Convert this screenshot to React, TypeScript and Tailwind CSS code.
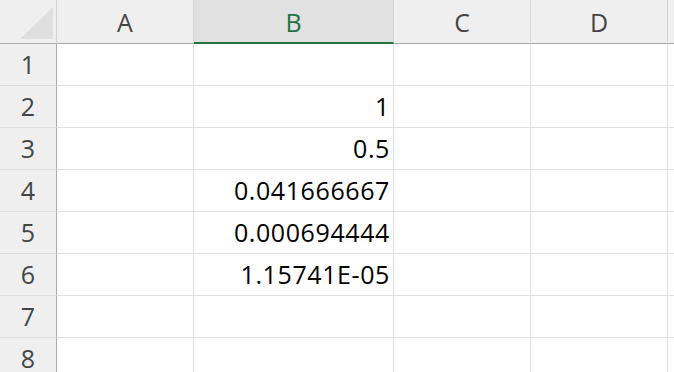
import React from 'react';

const cols = [
  { key: 'A', width: 'w-[137px]' },
  { key: 'B', width: 'w-[200px]' },
  { key: 'C', width: 'w-[137px]' },
  { key: 'D', width: 'w-[137px]' },
];

const values: Record<number, string> = {
  2: '1',
  3: '0.5',
  4: '0.041666667',
  5: '0.000694444',
  6: '1.15741E-05',
};

const rows = [1, 2, 3, 4, 5, 6, 7, 8];

const App: React.FC = () => {
  return (
    <div
      className="w-[674px] h-[372px] overflow-hidden bg-white text-[25px] leading-none text-[#222]"
      style={{ fontFamily: '"Open Sans", "Noto Sans", sans-serif' }}
    >
      {/* Column headers */}
      <div className="flex h-[44px] bg-[#efefef]">
        <div className="relative w-[57px] shrink-0 border-r border-b border-r-[#d4d4d4] border-b-[#ababab]">
          <svg className="absolute left-0 top-0" width="57" height="43" viewBox="0 0 57 43">
            <polygon points="20,39 53,39 53,7" fill="#dfdfdf" />
          </svg>
        </div>
        {cols.map((c) =>
          c.key === 'B' ? (
            <div
              key={c.key}
              className={`${c.width} shrink-0 flex items-center justify-center bg-[#e1e1e1] border-r border-r-[#d4d4d4] border-b-2 border-b-[#217346] text-[#217346] pt-[2px]`}
            >
              {c.key}
            </div>
          ) : (
            <div
              key={c.key}
              className={`${c.width} shrink-0 flex items-center justify-center border-r border-b border-r-[#d4d4d4] border-b-[#ababab] text-[#444] pt-[1px]`}
            >
              {c.key}
            </div>
          )
        )}
        <div className="flex-1 border-b border-b-[#ababab]" />
      </div>

      {/* Grid rows */}
      {rows.map((r) => (
        <div key={r} className="flex h-[42px]">
          <div className="w-[57px] shrink-0 flex items-center justify-center bg-[#efefef] border-r border-b border-r-[#ababab] border-b-[#dcdcdc] text-[#444]">
            {r}
          </div>
          {cols.map((c) => (
            <div
              key={c.key}
              className={`${c.width} shrink-0 flex items-center justify-end pr-[3px] border-r border-b border-[#e1e1e1] text-black tracking-[0.6px]`}
            >
              {c.key === 'B' ? values[r] ?? '' : ''}
            </div>
          ))}
          <div className="flex-1 border-b border-[#e1e1e1]" />
        </div>
      ))}
    </div>
  );
};

export default App;
